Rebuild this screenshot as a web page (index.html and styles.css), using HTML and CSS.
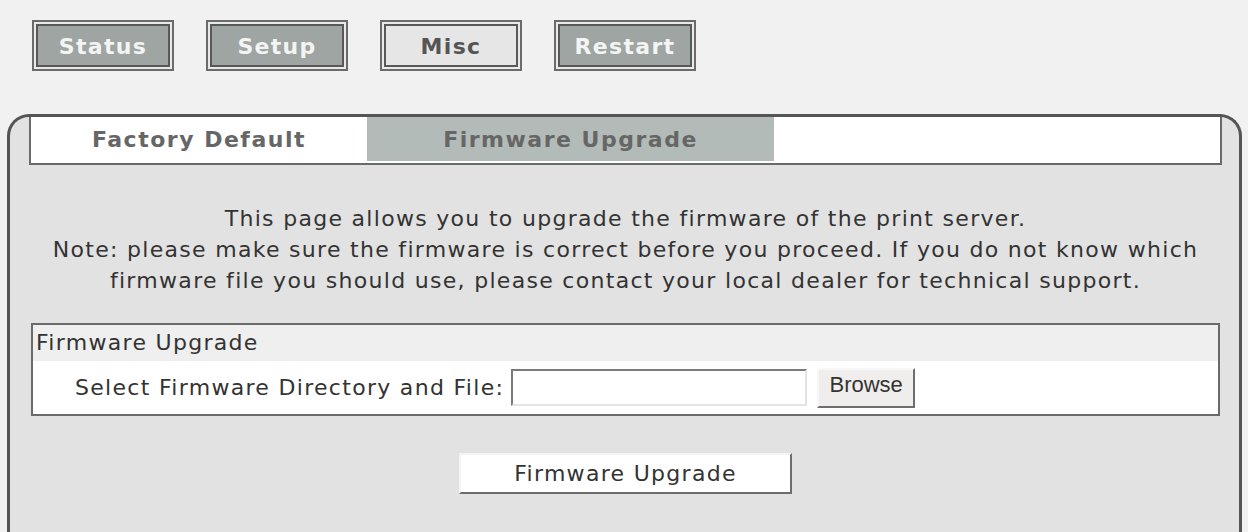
FILE: index.html
```html
<!DOCTYPE html>
<html lang="en">
<head>
    <meta charset="UTF-8">
    <title>Print Server - Misc</title>
    <link rel="stylesheet" href="styles.css">
</head>
<body>
    <div class="nav">
        <a class="nav-btn" href="#">Status</a>
        <a class="nav-btn" href="#">Setup</a>
        <a class="nav-btn active" href="#">Misc</a>
        <a class="nav-btn" href="#">Restart</a>
    </div>
    <div class="panel">
        <div class="tabs">
            <div class="tab current">Factory Default</div>
            <div class="tab other">Firmware Upgrade</div>
        </div>
        <p class="intro">
            This page allows you to upgrade the firmware of the print server.<br>
            Note: please make sure the firmware is correct before you proceed. If you do not know which<br>
            firmware file you should use, please contact your local dealer for technical support.
        </p>
        <div class="box">
            <div class="box-head">Firmware Upgrade</div>
            <div class="box-row">
                <span class="label">Select Firmware Directory and File:</span>
                <div class="file-input"></div>
                <div class="browse">Browse</div>
            </div>
        </div>
        <div class="actions">
            <div class="upgrade-btn">Firmware Upgrade</div>
        </div>
    </div>
</body>
</html>
```

FILE: styles.css
```css
body {
    margin: 0;
    padding: 0;
    background: #f1f1f1;
    font-family: "DejaVu Sans", Verdana, sans-serif;
    font-size: 22px;
    letter-spacing: 1.3px;
    color: #333;
}
.nav {
    display: flex;
    gap: 32px;
    padding: 20px 0 0 32px;
}
.nav-btn {
    box-sizing: border-box;
    width: 142px;
    height: 51px;
    border: 2px solid #6b6b6b;
    box-shadow: inset 0 0 0 2px #e9e9e9, inset 0 0 0 4px #585858;
    background: #9ea5a2;
    color: #f4f4f4;
    font-weight: bold;
    text-decoration: none;
    display: flex;
    align-items: center;
    justify-content: center;
    padding-top: 2px;
}
.nav-btn.active {
    background: #e6e6e6;
    color: #555;
}
.panel {
    margin: 43px 6px 0 7px;
    border: 3px solid #555;
    border-bottom: none;
    border-radius: 22px 22px 0 0;
    background: #e2e2e2;
    padding: 0 17px 0 19px;
    height: 415px;
}
.tabs {
    display: flex;
    height: 46px;
    background: #fff;
    border-left: 2px solid #6a6a6a;
    border-right: 2px solid #6a6a6a;
    border-bottom: 2px solid #6a6a6a;
}
.tab {
    display: flex;
    align-items: center;
    justify-content: center;
    font-weight: bold;
    letter-spacing: 1.5px;
    color: #666;
    height: 44px;
}
.tab.current {
    width: 336px;
}
.tab.other {
    width: 407px;
    background: #b3bbb8;
}
.intro {
    margin: 38px 0 0;
    text-align: center;
    line-height: 31px;
}
.box {
    margin: 27px 0 0 2px;
    width: 1185px;
    border: 2px solid #6a6a6a;
    background: #fff;
}
.box-head {
    height: 36px;
    line-height: 36px;
    background: #efefef;
    padding-left: 3px;
}
.box-row {
    display: flex;
    align-items: center;
    height: 53px;
    padding-left: 42px;
}
.label {
    margin-right: 7px;
}
.file-input {
    box-sizing: border-box;
    width: 296px;
    height: 37px;
    background: #fff;
    border: 2px solid #e4e4e4;
    border-top-color: #7a7a7a;
    border-left-color: #7a7a7a;
}
.browse {
    box-sizing: border-box;
    margin-left: 10px;
    width: 98px;
    height: 40px;
    background: #efeeec;
    border: 2px solid #f7f7f7;
    border-right-color: #6d6d6d;
    border-bottom-color: #6d6d6d;
    font-family: "Liberation Sans", Arial, sans-serif;
    letter-spacing: 0;
    display: flex;
    align-items: center;
    justify-content: center;
    padding-bottom: 6px;
}
.actions {
    display: flex;
    justify-content: center;
    margin-top: 37px;
}
.upgrade-btn {
    box-sizing: border-box;
    width: 333px;
    height: 41px;
    background: #fff;
    border: 2px solid #f4f4f4;
    border-right-color: #6d6d6d;
    border-bottom-color: #6d6d6d;
    display: flex;
    align-items: center;
    justify-content: center;
}
```
